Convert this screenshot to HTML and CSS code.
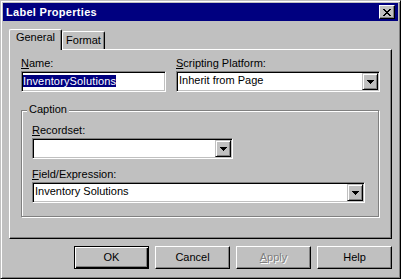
FILE: index.html
```html
<!DOCTYPE html>
<html lang="en">
<head>
  <meta charset="UTF-8">
  <title>Label Properties</title>
  <link rel="stylesheet" href="styles.css">
</head>
<body>
  <div class="window">
    <div class="titlebar">
      <span class="title">Label Properties</span>
      <span class="close-btn">
        <svg width="8" height="7" viewBox="0 0 8 7" shape-rendering="crispEdges"><path fill="#000" d="M0 0h2v1h-2z M6 0h2v1h-2z M1 1h2v1h-2z M5 1h2v1h-2z M2 2h4v1h-4z M3 3h2v1h-2z M2 4h4v1h-4z M1 5h2v1h-2z M5 5h2v1h-2z M0 6h2v1h-2z M6 6h2v1h-2z"/></svg>
      </span>
    </div>

    <div class="client">
      <div class="tabs">
        <div class="tab active">General</div>
        <div class="tab">Format</div>
      </div>

      <div class="panel">
        <div class="row">
          <div class="field name-field">
            <label><u>N</u>ame:</label>
            <div class="textbox"><span class="sel">InventorySolutions</span></div>
          </div>
          <div class="field platform-field">
            <label><u>S</u>cripting Platform:</label>
            <div class="combo">
              <span class="combo-text">Inherit from Page</span>
              <span class="drop"><svg width="7" height="4" viewBox="0 0 7 4" shape-rendering="crispEdges"><path fill="#000" d="M0 0h7v1h-7z M1 1h5v1h-5z M2 2h3v1h-3z M3 3h1v1h-1z"/></svg></span>
            </div>
          </div>
        </div>

        <div class="group">
          <div class="legend">Caption</div>
          <label class="first"><u>R</u>ecordset:</label>
          <div class="combo recordset">
            <span class="combo-text"></span>
            <span class="drop"><svg width="7" height="4" viewBox="0 0 7 4" shape-rendering="crispEdges"><path fill="#000" d="M0 0h7v1h-7z M1 1h5v1h-5z M2 2h3v1h-3z M3 3h1v1h-1z"/></svg></span>
          </div>
          <label class="second"><u>F</u>ield/Expression:</label>
          <div class="combo expression">
            <span class="combo-text">Inventory Solutions</span>
            <span class="drop"><svg width="7" height="4" viewBox="0 0 7 4" shape-rendering="crispEdges"><path fill="#000" d="M0 0h7v1h-7z M1 1h5v1h-5z M2 2h3v1h-3z M3 3h1v1h-1z"/></svg></span>
          </div>
        </div>
      </div>

      <div class="buttons">
        <div class="btn default">OK</div>
        <div class="btn">Cancel</div>
        <div class="btn disabled"><u>A</u>pply</div>
        <div class="btn">Help</div>
      </div>
    </div>
  </div>
</body>
</html>
```

FILE: styles.css
```css
body {
  margin: 0;
  background: #c0c0c0;
  font-family: "Liberation Sans", Arial, sans-serif;
  font-size: 11px;
  color: #000;
}

u {
  text-decoration: underline;
  text-underline-offset: 1px;
}

.window {
  width: 401px;
  height: 279px;
  box-sizing: border-box;
  border: 1px solid;
  border-color: #c0c0c0 #000 #000 #c0c0c0;
  box-shadow: inset 1px 1px #fff, inset -1px -1px #808080;
  padding: 2px;
  background: #c0c0c0;
}

.titlebar {
  height: 18px;
  background: #000080;
  display: flex;
  align-items: center;
  justify-content: space-between;
  padding: 0 3px 0 3px;
}

.title {
  color: #fff;
  font-weight: bold;
  line-height: 13px;
  letter-spacing: 0.3px;
}

.close-btn {
  width: 16px;
  height: 14px;
  box-sizing: border-box;
  border: 1px solid;
  border-color: #fff #000 #000 #fff;
  box-shadow: inset -1px -1px #808080;
  background: #c0c0c0;
  display: flex;
  align-items: center;
  justify-content: center;
  padding-right: 1px;
}

.close-btn svg {
  display: block;
}

.client {
  padding: 8px 6px 0 6px;
}

.tabs {
  display: flex;
  align-items: flex-end;
  height: 20px;
  position: relative;
  z-index: 1;
}

.tab {
  height: 18px;
  box-sizing: border-box;
  border: 1px solid;
  border-color: #fff #000 transparent #fff;
  border-bottom: none;
  border-radius: 2px 2px 0 0;
  box-shadow: inset -1px 0 #808080;
  width: 43px;
  text-align: center;
  line-height: 13px;
  padding-top: 2px;
}

.tab.active {
  width: 53px;
  height: 21px;
  margin-bottom: -1px;
  background: #c0c0c0;
  padding-top: 1px;
}

.panel {
  height: 190px;
  box-sizing: border-box;
  border: 1px solid;
  border-color: #fff #000 #000 #fff;
  box-shadow: inset -1px -1px #808080;
  padding: 7px 0 0 11px;
}

.row {
  display: flex;
  gap: 10px;
}

.name-field {
  width: 145px;
}

.platform-field {
  width: 204px;
}

label {
  display: block;
  line-height: 13px;
  height: 13px;
  margin-bottom: 1px;
}

.textbox,
.combo {
  height: 21px;
  box-sizing: border-box;
  border: 1px solid;
  border-color: #808080 #fff #fff #808080;
  box-shadow: inset 1px 1px #000, inset -1px -1px #c0c0c0;
  background: #fff;
}

.textbox {
  padding: 3px 1px 0 1px;
}

.sel {
  display: inline-block;
  height: 12px;
  line-height: 12px;
  background: #000080;
  color: #fff;
  letter-spacing: 0.15px;
}

.combo {
  display: flex;
}

.combo-text {
  flex: 1;
  line-height: 13px;
  padding: 2px 0 0 2px;
}

.drop {
  width: 16px;
  margin: 1px;
  box-sizing: border-box;
  border: 1px solid;
  border-color: #c0c0c0 #000 #000 #c0c0c0;
  box-shadow: inset 1px 1px #fff, inset -1px -1px #808080;
  background: #c0c0c0;
  display: flex;
  align-items: center;
  justify-content: center;
}

.drop svg {
  display: block;
}

.group {
  margin-top: 18px;
  width: 358px;
  height: 107px;
  box-sizing: border-box;
  border: 1px solid #808080;
  box-shadow: 1px 1px #fff, inset 1px 1px #fff;
  padding: 0 0 0 10px;
}

.legend {
  display: table;
  margin: -8px 0 0 -5px;
  padding: 0 2px;
  line-height: 13px;
  background: #c0c0c0;
}

.group label.first {
  margin-top: 8px;
}

.group label.second {
  margin-top: 9px;
}

.recordset {
  width: 201px;
}

.expression {
  width: 333px;
}

.buttons {
  display: flex;
  justify-content: flex-end;
  gap: 6px;
  margin-top: 7px;
}

.btn {
  width: 75px;
  height: 23px;
  box-sizing: border-box;
  border: 1px solid;
  border-color: #fff #000 #000 #fff;
  box-shadow: inset -1px -1px #808080;
  display: flex;
  align-items: center;
  justify-content: center;
  line-height: 13px;
}

.btn.default {
  border-color: #000;
  box-shadow: inset 1px 1px #fff, inset -1px -1px #000, inset -2px -2px #808080;
}

.btn.disabled {
  color: #808080;
  text-shadow: 1px 1px 0 #fff;
}
```
